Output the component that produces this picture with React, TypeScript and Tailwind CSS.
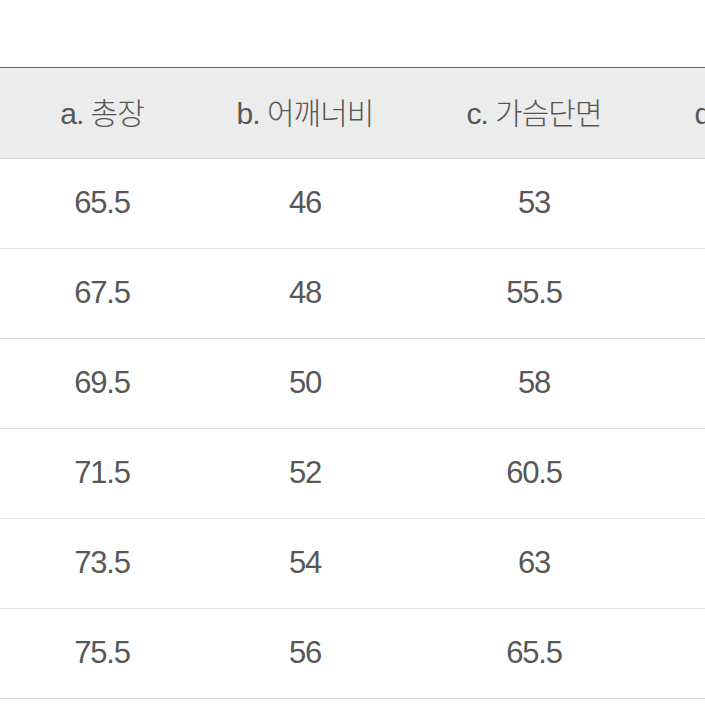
const HEADERS = ["a. 총장", "b. 어깨너비", "c. 가슴단면", "d. 소매길이"];

const ROWS: string[][] = [
  ["65.5", "46", "53", "60"],
  ["67.5", "48", "55.5", "61"],
  ["69.5", "50", "58", "62"],
  ["71.5", "52", "60.5", "63"],
  ["73.5", "54", "63", "64"],
  ["75.5", "56", "65.5", "65"],
];

const COLS = "grid grid-cols-[190px_230px_228px_230px]";

export default function App() {
  return (
    <div
      className="w-[705px] h-[705px] overflow-hidden bg-white text-[#575757]"
      style={{ fontFamily: '"Liberation Sans", "Noto Sans CJK KR", sans-serif' }}
    >
      <div className="h-[67px]" />
      <div className="w-[878px] border-t border-[#6b6b6b]">
        <div className={`${COLS} h-[91px] bg-[#ececec] border-b border-[#d9d9d9] items-center`}>
          {HEADERS.map((h, i) => (
            <div
              key={h}
              className={`text-center text-[30px] tracking-[-1px] font-light whitespace-nowrap ${i === 0 ? "pl-[14px]" : ""}`}
            >
              {h}
            </div>
          ))}
        </div>
        {ROWS.map((row, r) => (
          <div key={r} className={`${COLS} h-[90px] border-b border-[#dedede] items-center`}>
            {row.map((v, i) => (
              <div
                key={i}
                className={`text-center text-[31px] tracking-[-1.2px] ${i === 0 ? "pl-[14px]" : ""}`}
              >
                {v}
              </div>
            ))}
          </div>
        ))}
      </div>
    </div>
  );
}
